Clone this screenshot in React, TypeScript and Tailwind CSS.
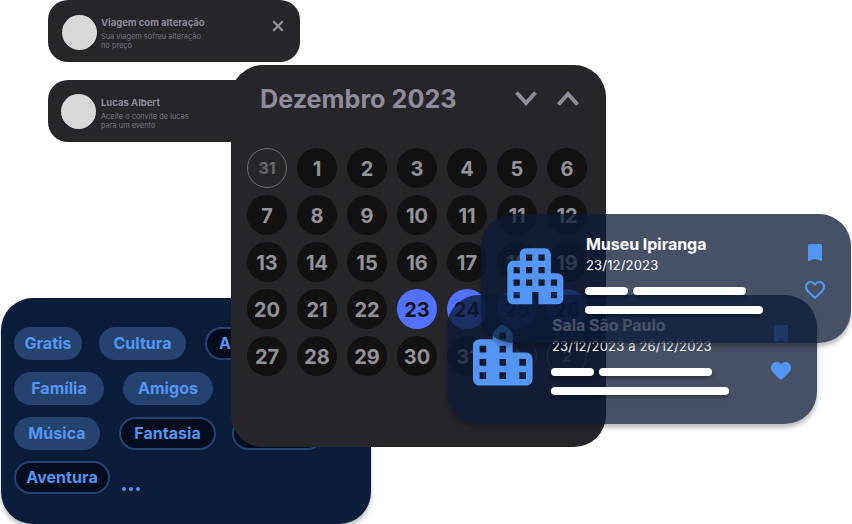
import React from "react";

const apartment =
  "M17 11V5c0-1.1-.9-2-2-2H9c-1.1 0-2 .9-2 2v2H5c-1.1 0-2 .9-2 2v10c0 1.1.9 2 2 2h6v-4h2v4h6c1.1 0 2-.9 2-2v-6c0-1.1-.9-2-2-2h-2zM7 19H5v-2h2v2zm0-4H5v-2h2v2zm0-4H5V9h2v2zm4 4H9v-2h2v2zm0-4H9V9h2v2zm0-4H9V5h2v2zm4 8h-2v-2h2v2zm0-4h-2V9h2v2zm0-4h-2V5h2v2zm4 12h-2v-2h2v2zm0-4h-2v-2h2v2z";
const city =
  "M15 11V5.83c0-.53-.21-1.04-.59-1.41L13.41 3.3a2 2 0 0 0-2.82 0L9.59 4.42C9.21 4.79 9 5.3 9 5.83V7H5c-1.1 0-2 .9-2 2v10c0 1.1.9 2 2 2h14c1.1 0 2-.9 2-2v-6c0-1.1-.9-2-2-2h-4zM7 19H5v-2h2v2zm0-4H5v-2h2v2zm0-4H5V9h2v2zm6 8h-2v-2h2v2zm0-4h-2v-2h2v2zm0-4h-2V9h2v2zm0-4h-2V5h2v2zm6 12h-2v-2h2v2zm0-4h-2v-2h2v2z";
const heart =
  "M12 21l-1.450-1.300C5.400 15.360 2 12.280 2 8.500 2 5.420 4.420 3 7.500 3c1.740 0 3.410.810 4.500 2.090C13.090 3.810 14.760 3 16.500 3 19.580 3 22 5.420 22 8.500c0 3.780-3.400 6.860-8.550 11.200L12 21z";
const heartOutline =
  "M16.500 3c-1.740 0-3.410.810-4.500 2.090C10.910 3.810 9.240 3 7.500 3 4.420 3 2 5.420 2 8.500c0 3.780 3.400 6.860 8.550 11.200L12 21l1.450-1.300C18.600 15.360 22 12.280 22 8.500 22 5.420 19.580 3 16.500 3zm-4.400 15.300l-.1.1-.1-.1C7.140 14.240 4 11.390 4 8.500 4 6.500 5.500 5 7.500 5c1.540 0 3.040.990 3.570 2.360h1.870C13.460 5.990 14.960 5 16.500 5c2 0 3.500 1.500 3.500 3.500 0 2.890-3.140 5.740-7.900 9.800z";

function Notice({ title, lines, closable }: { title: string; lines: string[]; closable?: boolean }) {
  return (
    <div className="flex h-[62px] w-[252px] rounded-[20px] bg-[#26252a] pl-[13px] pr-4">
      <div className={`size-[35px] shrink-0 rounded-full bg-[#d9d9d9] ${closable ? "mt-[15px] ml-px" : "mt-[14px]"}`} />
      <div className={`${closable ? "ml-1" : "ml-[5px]"} mt-[17px] flex-1 text-[#8f8c99]`}>
        <div className="text-[9.5px] leading-3 font-bold">{title}</div>
        <div className="mt-1 text-[7.4px] leading-[8.8px] opacity-80">
          {lines.map((l) => <div key={l}>{l}</div>)}
        </div>
      </div>
      {closable && (
        <svg className="mt-[19.5px] size-3" viewBox="0 0 12 12" fill="none" stroke="#96939f" strokeWidth="2.2">
          <path d="M1.200 1.200l9.600 9.600M10.800 1.200l-9.600 9.600" />
        </svg>
      )}
    </div>
  );
}

type TagProps = { label: string; box: string; outlined?: boolean };
const tagRows: TagProps[][] = [
  [
    { label: "Gratis", box: "w-[68px]" },
    { label: "Cultura", box: "ml-[17px] w-[87px]" },
    { label: "Arte", box: "ml-[19px] w-[62px]", outlined: true },
  ],
  [
    { label: "Família", box: "w-[90px]" },
    { label: "Amigos", box: "ml-[19px] w-[90px]" },
  ],
  [
    { label: "Música", box: "w-[86px]" },
    { label: "Fantasia", box: "ml-[19px] w-[97px]", outlined: true },
    { label: "", box: "ml-4 w-[92px]", outlined: true },
  ],
  [{ label: "Aventura", box: "w-[96px]", outlined: true }],
];

function Tags() {
  return (
    <section className="absolute top-[298px] left-px flex h-[226px] w-[370px] flex-col gap-3 rounded-[32px] bg-[#0c1d3a] pt-[29px] pl-[13px] shadow-[0_4px_4px_rgba(0,0,0,0.25)]">
      {tagRows.map((row, i) => (
        <div key={i} className={`flex h-[33px] ${i === 3 ? "-mt-px" : ""}`}>
          {row.map((t, j) => (
            <div
              key={j}
              className={`flex h-[33px] shrink-0 items-center justify-center rounded-full pb-0.5 text-[16px] leading-5 font-bold tracking-[0.05px] text-[#5395f2] ${t.box} ${t.outlined ? "border-2 border-[#264370] bg-[#030d1e]" : "bg-[#264370]"}`}
            >
              {t.label}
            </div>
          ))}
          {i === 3 && (
            <div className="mt-[26px] ml-3 flex gap-[3px]">
              {[0, 1, 2].map((d) => <i key={d} className="size-1 rounded-full bg-[#5395f2]" />)}
            </div>
          )}
        </div>
      ))}
    </section>
  );
}

const weeks = [
  [31, 1, 2, 3, 4, 5, 6],
  [7, 8, 9, 10, 11, 11, 12],
  [13, 14, 15, 16, 17, 18, 19],
  [20, 21, 22, 23, 24, 25, 26],
  [27, 28, 29, 30, 31, 1, 2],
];

function dayStyle(w: number, d: number) {
  if ((w === 0 && d === 0) || (w === 4 && d > 4)) return "border border-[#6a696d] text-[16px] text-[#6a696d]";
  if (w === 3 && d > 2) return "bg-[#5271ff] text-[20px] text-[#121214] pt-0.5";
  return "bg-[#121212] text-[20px] text-[#939298] pt-0.5";
}

function Calendar() {
  return (
    <section className="absolute top-[65px] left-[231px] h-[382px] w-[375px] rounded-[32px] bg-[#26252a] px-4">
      <header className="flex h-[83px] items-start pt-[18px] pl-[13px] text-[#8f8c99]">
        <h1 className="flex-1 text-[25.2px] leading-8 font-bold whitespace-nowrap">Dezembro 2023</h1>
        <svg className="mt-2 h-4 w-[22px]" viewBox="0 0 22 16" fill="none" stroke="currentColor" strokeWidth="4">
          <path d="M1.500 1.500L11 12L20.500 1.500" />
        </svg>
        <svg className="mt-2 mr-[11px] ml-5 h-4 w-[22px]" viewBox="0 0 22 16" fill="none" stroke="currentColor" strokeWidth="4">
          <path d="M1.500 13.500L11 3L20.500 13.500" />
        </svg>
      </header>
      <div className="grid grid-cols-[repeat(7,40px)] gap-x-[10px] gap-y-[7px]">
        {weeks.map((week, w) =>
          week.map((n, d) => (
            <div key={`${w}-${d}`} className={`flex size-10 items-center justify-center rounded-full font-bold ${dayStyle(w, d)}`}>
              {n}
            </div>
          )),
        )}
      </div>
    </section>
  );
}

function Bar({ width }: { width: string }) {
  return <div className={`h-2 rounded-full bg-white shadow-[0_3px_3px_rgba(0,0,0,0.25)] ${width}`} />;
}

function Place({ title, date, building, liked, place }: { title: string; date: string; building: React.ReactNode; liked?: boolean; place: string }) {
  return (
    <article className={`absolute flex h-[129px] w-[370px] rounded-[32px] bg-[#0c1a35]/76 shadow-[0_4px_4px_rgba(0,0,0,0.25)] ${place}`}>
      <div className="w-[105px] shrink-0">{building}</div>
      <div className="flex-1 pt-[20px] text-white">
        <h2 className="text-[16px] leading-5 font-bold tracking-[-0.04px]">{title}</h2>
        <p className="mt-[3px] text-[13px] leading-4 tracking-[0.17px] whitespace-nowrap">{date}</p>
        <div className="-ml-px mt-[14px] flex gap-[5px]">
          <Bar width="w-[43px]" />
          <Bar width="w-[113px]" />
        </div>
        <div className="-ml-px mt-[11px]"><Bar width="w-[178px]" /></div>
      </div>
      <div className="mr-6 flex w-6 flex-col text-[#5395f2]">
        <svg className="mt-[27px] size-6" viewBox="0 0 24 24" fill="currentColor">
          <path d="M6.500 3h11C18.300 3 19 3.700 19 4.500v14.600c0 .7-.6 1.100-1.200.9L14.500 18.600c-1.600-.9-3.400-.9-5 0L6.200 20c-.6.2-1.200-.2-1.200-.9V4.500C5 3.700 5.700 3 6.500 3z" />
        </svg>
        <svg className="mt-[13px] size-6" viewBox="0 0 24 24" fill="currentColor">
          <path d={liked ? heart : heartOutline} />
        </svg>
      </div>
    </article>
  );
}

export default function App() {
  return (
    <main className="relative h-[524px] w-[852px] overflow-hidden bg-white font-['Inter',sans-serif]">
      <div className="flex flex-col gap-[18px] pl-12">
        <Notice title="Viagem com alteração" lines={["Sua viagem sofreu alteração", "no preço"]} closable />
        <Notice title="Lucas Albert" lines={["Aceite o convite de lucas", "para um evento"]} />
      </div>
      <Tags />
      <Calendar />
      <Place
        place="top-[295px] left-[447px]"
        title="Sala São Paulo"
        date="23/12/2023 á 26/12/2023"
        liked
        building={
          <svg className="mt-[20.7px] ml-[16px] size-[79.500px]" viewBox="0 0 24 24" fill="#5395f2"><path d={city} fillRule="evenodd" /></svg>
        }
      />
      <Place
        place="top-[214px] left-[481px]"
        title="Museu Ipiranga"
        date="23/12/2023"
        building={
          <svg className="mt-[24.7px] ml-[16.700px] size-[74.700px]" viewBox="0 0 24 24" fill="#5395f2"><path d={apartment} fillRule="evenodd" /></svg>
        }
      />
    </main>
  );
}
